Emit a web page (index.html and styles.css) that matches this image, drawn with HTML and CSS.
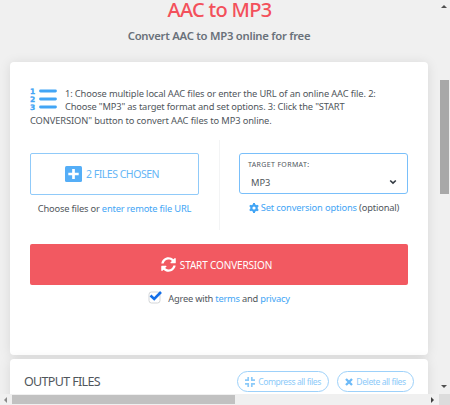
FILE: index.html
```html
<!DOCTYPE html>
<html lang="en">
<head>
    <meta charset="UTF-8" />
    <title>AAC to MP3</title>
    <link rel="stylesheet" href="styles.css">
</head>
<body>
    <div class="window">
        <main class="page">
            <h1 class="title"><span>AAC to MP3</span></h1>
            <h2 class="subtitle"><span>Convert AAC to MP3 online for free</span></h2>

            <form class="card converter">
                <div class="intro">
                    <svg class="icon-list" viewBox="0 0 27 24">
                        <g class="numbers">
                            <text x="0" y="7">1</text>
                            <text x="0" y="15">2</text>
                            <text x="0" y="23">3</text>
                        </g>
                        <path d="M10.500 4h15M10.500 12h15M10.500 20h15" stroke="#42a5f5" stroke-width="2.800" stroke-linecap="round" />
                    </svg>
                    <span class="line1">1: Choose multiple local AAC files or enter the URL of an online AAC file. 2:</span><br>
                    <span class="line2">Choose "MP3" as target format and set options. 3: Click the "START</span><br>
                    <span class="line3">CONVERSION" button to convert AAC files to MP3 online.</span>
                </div>

                <div class="columns">
                    <div class="col">
                        <button type="button" class="btn-files">
                            <svg width="17" height="16" viewBox="0 0 17 16">
                                <rect width="17" height="16" rx="1.500" fill="#55aef7" />
                                <path d="M8.500 3v10M3.300 8h10.400" stroke="#fff" stroke-width="2.700" />
                            </svg>
                            <span>2 FILES CHOSEN</span>
                        </button>
                        <p class="hint hint-files"><span>Choose files or <a href="#">enter remote file URL</a></span></p>
                    </div>
                    <div class="col">
                        <div class="select">
                            <label><span>TARGET FORMAT:</span></label>
                            <div class="value">
                                <span>MP3</span>
                                <svg width="8" height="6" viewBox="0 0 8 6"><path d="M1.200 1.500L4 4.200L6.800 1.500" fill="none" stroke="#333a42" stroke-width="1.600" /></svg>
                            </div>
                        </div>
                        <p class="hint hint-options">
                            <svg width="10" height="10" viewBox="0 0 10 10">
                                <circle cx="5" cy="5" r="2.700" fill="none" stroke="#42a5f5" stroke-width="2.200" />
                                <path d="M5 0v2M5 8v2M.700 2.500l1.700 1M7.600 6.500l1.700 1M.700 7.500l1.700-1M7.600 3.500l1.700-1" stroke="#42a5f5" stroke-width="2" />
                            </svg>
                            <span><a href="#">Set conversion options</a> (optional)</span>
                        </p>
                    </div>
                </div>

                <button type="button" class="btn-start">
                    <svg width="15" height="15" viewBox="0 0 512 512">
                        <path fill="#fff" d="M370.700 133.300C339.500 104 298.900 88 255.800 88c-77.500.100-144.300 53.200-162.800 126.900-1.300 5.400-6.100 9.100-11.700 9.100H24.100c-7.500 0-13.200-6.800-11.800-14.200C33.900 94.900 134.800 8 256 8c66.400 0 126.800 26.100 171.300 68.700L463 41c15.100-15.100 41-4.400 41 17v134c0 13.300-10.700 24-24 24H346c-21.400 0-32.100-25.900-17-41l41.700-41.700zM32 296h134c21.400 0 32.100 25.900 17 41l-41.800 41.800c31.300 29.300 71.800 45.300 114.900 45.300 77.400-.100 144.300-53.100 162.800-126.800 1.300-5.400 6.100-9.100 11.700-9.100h57.300c7.500 0 13.200 6.800 11.800 14.200C478.100 417.100 377.200 504 256 504c-66.400 0-126.800-26.100-171.300-68.700L49 471c-15.100 15.100-41 4.400-41-17V320c0-13.300 10.700-24 24-24z" />
                    </svg>
                    <span>START CONVERSION</span>
                </button>

                <div class="agree">
                    <svg width="15" height="14" viewBox="0 0 15 14">
                        <rect x="1" y="2" width="11" height="11" rx="2.500" fill="#fff" stroke="#d3d5d8" />
                        <path d="M2.500 5.500L6.200 8.900L13 2" fill="none" stroke="#146fe8" stroke-width="2.600" />
                    </svg>
                    <span>Agree with <a href="#">terms</a> and <a href="#">privacy</a></span>
                </div>
            </form>

            <section class="card output">
                <h3><span>OUTPUT FILES</span></h3>
                <button type="button" class="pill pill-compress">
                    <svg width="10" height="10" viewBox="0 0 10 10"><path d="M3.200 0v3.200H0M6.800 0v3.200H10M0 6.800h3.200V10M10 6.800H6.800V10" fill="none" stroke="#8ccaf9" stroke-width="1.700" /></svg>
                    <span>Compress all files</span>
                </button>
                <button type="button" class="pill pill-delete">
                    <svg width="8" height="8" viewBox="0 0 8 8"><path d="M1 1l6 6M7 1L1 7" stroke="#6dbaf8" stroke-width="2.300" /></svg>
                    <span>Delete all files</span>
                </button>
            </section>
        </main>

        <div class="scroll-y">
            <i class="arrow up"></i>
            <i class="thumb"></i>
            <i class="arrow down"></i>
        </div>
        <div class="scroll-x">
            <i class="arrow left"></i>
            <i class="thumb"></i>
            <i class="arrow right"></i>
        </div>
        <div class="corner"></div>
    </div>
</body>
</html>
```

FILE: styles.css
```css
* {
    box-sizing:border-box;
}
body {
    margin:0;
    overflow:hidden;
    background:#f0f0f0;
    color:#50565c;
    font-family:"Noto Sans", "Open Sans", sans-serif;
    font-size:9.300px;
}
h1, h2, h3, p {
    margin:0;
    font-weight:400;
}
a {
    color:#42a5f5;
    text-decoration:none;
}
button {
    padding:0;
    font-family:inherit;
}
svg {
    flex:none;
}
span {
    white-space:nowrap;
}
.window {
    display:grid;
    grid-template-columns:439px 11px;
    grid-template-rows:394px 11px;
    width:450px;
    height:405px;
}
.page {
    overflow:hidden;
    padding-left:10px;
}
.title {
    width:419px;
    height:23px;
    line-height:20px;
    color:#f3505b;
    font-size:20px;
    font-weight:500;
    letter-spacing:-.700px;
    text-align:center;
}
.subtitle {
    width:418px;
    height:39px;
    line-height:26px;
    color:#69717a;
    font-size:11.300px;
    font-weight:600;
    letter-spacing:-.260px;
    text-align:center;
}
.card {
    width:418px;
    background:#fff;
    border-radius:4px;
    box-shadow:0 1px 12px rgba(0,0,0,.1);
}
.converter {
    height:293px;
    padding:25px 20px 0;
}
.intro {
    height:53px;
    line-height:13.300px;
}
.line1 {
    letter-spacing:-.130px;
}
.line2 {
    letter-spacing:-.160px;
}
.line3 {
    letter-spacing:-.100px;
}
.icon-list {
    float:left;
    width:27px;
    height:24px;
    margin-right:8px;
    overflow:visible;
}
.numbers {
    fill:#42a5f5;
    stroke:#42a5f5;
    stroke-width:.300px;
    font-family:"DejaVu Sans", sans-serif;
    font-size:7.500px;
    font-weight:700;
}
.columns {
    display:flex;
    height:90px;
}
.col {
    width:189px;
    padding:13px 20px 0 0;
}
.col + .col {
    padding:13px 0 0 20px;
    border-left:1px solid #f3f4f5;
}
.btn-files {
    display:flex;
    align-items:center;
    justify-content:center;
    gap:4px;
    width:169px;
    height:42px;
    padding-right:5px;
    border:1px solid #90caf9;
    border-radius:2px;
    background:#fff;
    color:#64b5f6;
    font-size:10.500px;
    letter-spacing:-.480px;
}
.hint {
    display:flex;
    justify-content:center;
    height:27px;
    line-height:27px;
    letter-spacing:-.180px;
}
.hint-options {
    align-items:center;
    gap:2px;
    letter-spacing:-.150px;
}
.select {
    width:169px;
    height:41px;
    margin-left:-1px;
    padding:5px 9px 0 8px;
    border:1px solid #79bffa;
    border-radius:3px;
}
.select label {
    display:block;
    height:11px;
    line-height:11px;
    font-size:7px;
    letter-spacing:.350px;
}
.value {
    display:flex;
    align-items:center;
    justify-content:space-between;
    height:24px;
    padding:0 1px 0 3px;
}
.btn-start {
    display:flex;
    align-items:center;
    justify-content:center;
    gap:4px;
    width:378px;
    height:41px;
    margin-top:14px;
    padding-right:5px;
    border:0;
    border-radius:2px;
    background:#f25961;
    color:#fff;
    font-size:10px;
    letter-spacing:-.150px;
}
.agree {
    display:flex;
    align-items:center;
    justify-content:center;
    gap:5px;
    height:27px;
    letter-spacing:-.220px;
}
.agree svg {
    margin-top:-4px;
}
.output {
    display:flex;
    height:50px;
    margin-top:4px;
    padding:12px 14px 0;
}
.output h3 {
    flex:1;
    line-height:21px;
    font-size:12.500px;
    letter-spacing:-.660px;
}
.pill {
    display:flex;
    align-items:center;
    justify-content:center;
    gap:3px;
    height:21px;
    border:1px solid #9dd1fa;
    border-radius:11px;
    background:#fff;
    color:#8ccaf9;
    font-size:8.600px;
    letter-spacing:-.430px;
}
.pill-compress {
    width:92px;
    margin-right:8px;
}
.pill-delete {
    width:77px;
}
.scroll-y {
    display:flex;
    flex-direction:column;
    align-items:center;
    padding-right:1px;
}
.scroll-y .thumb {
    width:9px;
    height:114px;
    margin-top:72px;
    background:#a8a8a8;
}
.arrow {
    border:3px solid transparent;
}
.up {
    margin-top:2px;
    border-bottom-color:#505050;
}
.down {
    margin-top:191px;
    border-top-color:#505050;
}
.scroll-x {
    display:flex;
    align-items:center;
}
.scroll-x .thumb {
    width:223px;
    height:9px;
    margin-left:5px;
    background:#c1c1c1;
}
.left {
    margin-left:1px;
    border-right-color:#8a8a8a;
}
.right {
    margin-left:196px;
    border-left-color:#404040;
}
.corner {
    background:#dcdcdc;
}
```
